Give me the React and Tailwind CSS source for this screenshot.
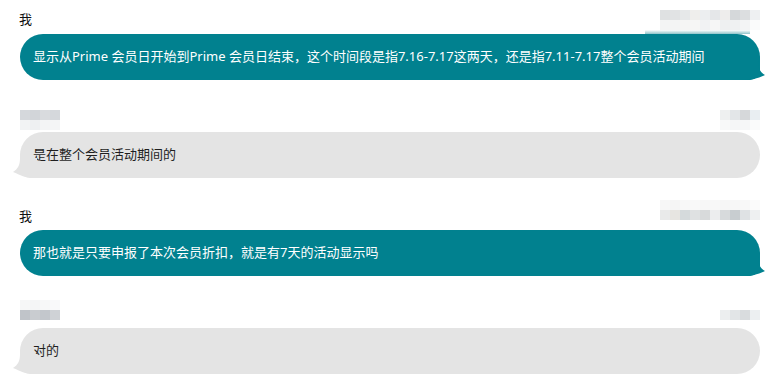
import React from 'react';

const TEAL = '#01818f';

// pixelated name blocks (the names are mosaicked in the screenshot)
function Mosaic({ rows, className = '' }) {
  return (
    <div className={`flex flex-col ${className}`}>
      {rows.map((row, i) => (
        <div key={i} className="flex">
          {row.map((c, j) => (
            <div key={j} className="w-[10px] h-[10px]" style={{ backgroundColor: c }} />
          ))}
        </div>
      ))}
    </div>
  );
}

function MineBubble({ text, fade }) {
  return (
    <div className="relative h-[46px] bg-[#01818f] rounded-[23px] rounded-br-[10px] flex items-center pl-[13px] pr-[20px]">
      {fade && (
        <div className="absolute -top-[4px] right-[10px] w-[105px] h-[4px] bg-gradient-to-b from-transparent to-[#8fc4ca]" />
      )}
      <span className="relative text-white text-[13px] whitespace-nowrap">{text}</span>
      <svg className="absolute -right-[6px] bottom-0" width="24" height="20" viewBox="0 0 24 20">
        <path d="M0 0H16C16 8 18 12 23 15C16 18 10 20 3 20H0Z" fill={TEAL} />
      </svg>
    </div>
  );
}

function OtherBubble({ text }) {
  return (
    <div className="relative h-[46px] bg-[#e4e4e4] rounded-[23px] rounded-bl-[10px] flex items-center pl-[13px] pr-[20px]">
      <span className="relative text-[#1f1f1f] text-[13px] whitespace-nowrap">{text}</span>
      <svg className="absolute -left-[7px] bottom-0" width="24" height="20" viewBox="0 0 24 20">
        <path d="M24 0H7C7 7 5 11 0 14C7 17 13 20 20 20H24Z" fill="#e4e4e4" />
      </svg>
    </div>
  );
}

export default function App() {
  return (
    <div
      className="w-[780px] h-[388px] bg-white overflow-hidden px-[20px] pt-[10px]"
      style={{ fontFamily: '"Noto Sans", "Noto Sans CJK SC", sans-serif' }}
    >
      {/* message 1 */}
      <div className="flex justify-between h-[24px]">
        <span className="text-[13px] leading-[18px] text-[#111] -ml-[1px]">我</span>
        <Mosaic
          rows={[
            ['#dfe1e2', '#e1e3e4', '#e6e8e9', '#efeeec', '#eceef0', '#e5e7e9', '#eeedec', '#d5d8da', '#dcdee0', '#eef0f2'],
            ['#f3f4f4', '#f3f4f4', '#f5f5f4', '#f6f6f5', '#f1f2f3', '#f6f6f6', '#eef0f1', '#eff1f2', '#f3f4f5', '#fafbfb'],
          ]}
        />
      </div>
      <MineBubble
        fade
        text="显示从Prime 会员日开始到Prime 会员日结束，这个时间段是指7.16-7.17这两天，还是指7.11-7.17整个会员活动期间"
      />

      {/* message 2 */}
      <div className="flex justify-between h-[22px] mt-[30px]">
        <Mosaic
          rows={[
            ['#d5d8dc', '#d2d5d9', '#d9dbde', '#d5d8dc'],
            ['#f2f3f4', '#eef0f2', '#f3f4f5', '#f4f5f6'],
          ]}
        />
        <Mosaic
          rows={[
            ['#eef0f0', '#e3e6e8', '#d6d8da', '#e9eef2'],
            ['#f8f9f9', '#f5f6f7', '#f6f7f8', '#fafbfb'],
          ]}
        />
      </div>
      <OtherBubble text="是在整个会员活动期间的" />

      {/* message 3 */}
      <div className="flex justify-between h-[30px] mt-[22px]">
        <span className="text-[13px] leading-[18px] text-[#111] mt-[7px] -ml-[1px]">我</span>
        <Mosaic
          rows={[
            ['#f7f7f7', '#f5f5f5', '#f8f8f8', '#f9f9f9', '#f7f7f7', '#f8f8f8', '#f6f6f6', '#f7f7f7', '#f8f8f8', '#fbfbfb'],
            ['#e9eaea', '#e7e5e1', '#d5dadc', '#dfe1e2', '#d8dadb', '#ecedee', '#d7dadc', '#c8cdd0', '#dfe2e4', '#eef0f1'],
          ]}
        />
      </div>
      <MineBubble text="那也就是只要申报了本次会员折扣，就是有7天的活动显示吗" />

      {/* message 4 */}
      <div className="flex justify-between h-[28px] mt-[24px]">
        <Mosaic
          rows={[
            ['#f6f7f7', '#f4f5f6', '#f7f8f8', '#f9f9fa'],
            ['#c0c4c9', '#c9ccd0', '#c3c7cc', '#cfd2d6'],
          ]}
        />
        <Mosaic
          className="mt-[10px]"
          rows={[
            ['#eceeef', '#e2e5e7', '#d9dcde', '#eceff1'],
          ]}
        />
      </div>
      <OtherBubble text="对的" />
    </div>
  );
}
